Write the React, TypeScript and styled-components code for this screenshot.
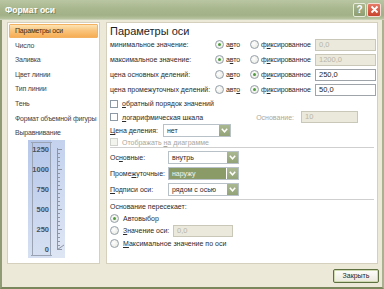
import React from 'react';
import styled, { createGlobalStyle, css } from 'styled-components';

const GlobalStyle = createGlobalStyle`
  html, body { margin: 0; padding: 0; }
  body {
    width: 384px;
    height: 289px;
    overflow: hidden;
    background: #ece9d8;
    font-family: "Liberation Sans", Arial, sans-serif;
  }
  * { box-sizing: border-box; }
`;

const sections = [
  'Параметры оси',
  'Число',
  'Заливка',
  'Цвет линии',
  'Тип линии',
  'Тень',
  'Формат объемной фигуры',
  'Выравнивание',
];

const valueRows = [
  { label: 'минимальное значение:', auto: true, value: '0,0' },
  { label: 'максимальное значение:', auto: true, value: '1200,0' },
  { label: 'цена основных делений:', auto: false, value: '250,0' },
  { label: 'цена промежуточных делений:', auto: false, value: '50,0' },
];

const tickRows = [
  { label: <>Ос<u>н</u>овные:</>, value: 'внутрь' },
  { label: <>Проме<u>ж</u>уточные:</>, value: 'наружу', active: true },
  { label: <><u>П</u>одписи оси:</>, value: 'рядом с осью' },
];

const Chevron = () => (
  <svg width="7" height="5" viewBox="0 0 7 5">
    <path d="M0.8 0.8 L3.5 3.8 L6.2 0.8" fill="none" stroke="#ffffff" strokeWidth="1.5" />
  </svg>
);

const AxisPreview = () => {
  const labels = ['1250', '1000', '750', '500', '250', '0'];
  const ticks = [];
  for (let i = 0; i <= 25; i++) {
    const y = 9 + i * 4;
    const major = i % 5 === 0;
    ticks.push(
      <line key={i} x1="29.5" y1={y + 0.5} x2={major ? 34 : 32} y2={y + 0.5} stroke="#8d95a4" strokeWidth="1" />
    );
  }
  return (
    <svg width="37" height="118" viewBox="0 0 37 118">
      <defs>
        <linearGradient id="pv" x1="0" y1="0" x2="0" y2="1">
          <stop offset="0" stopColor="#b6c7ea" />
          <stop offset="1" stopColor="#d6e0f2" />
        </linearGradient>
      </defs>
      <rect x="0" y="0" width="37" height="118" fill="url(#pv)" />
      <rect x="23" y="0" width="14" height="118" fill="#ffffff" opacity="0.2" />
      <line x1="4.5" y1="3" x2="4.5" y2="116" stroke="#9aa3b4" />
      <line x1="22.5" y1="3" x2="22.5" y2="116" stroke="#9aa3b4" />
      <line x1="3" y1="115.5" x2="24" y2="115.5" stroke="#9aa3b4" />
      <line x1="3" y1="2.5" x2="24" y2="2.5" stroke="#9aa3b4" />
      {labels.map((l, i) => (
        <text
          key={l}
          x="21"
          y={12 + i * 20}
          textAnchor="end"
          fontSize="7.5"
          fontWeight="bold"
          fill="#4a4f5a"
          fontFamily='"Liberation Sans", Arial, sans-serif'
        >
          {l}
        </text>
      ))}
      <line x1="29.5" y1="8" x2="29.5" y2="110" stroke="#8d95a4" />
      {ticks}
      <line x1="29.5" y1="109.5" x2="36" y2="105" stroke="#8d95a4" />
    </svg>
  );
};

const App: React.FC = () => {
  return (
    <Window>
      <GlobalStyle />
      <TitleBar>
        <Title>Формат оси</Title>
        <TitleButtons>
          <HelpButton>?</HelpButton>
          <CloseButton>
            <svg width="9" height="9" viewBox="0 0 9 9">
              <path d="M1.5 1.5 L7.5 7.5 M7.5 1.5 L1.5 7.5" stroke="#ffffff" strokeWidth="1.8" />
            </svg>
          </CloseButton>
        </TitleButtons>
      </TitleBar>
      <Frame>
        <Body>
          <SidePanel>
            <SectionList>
              {sections.map((s, i) => (
                <SectionItem key={s} $selected={i === 0}>
                  {s}
                </SectionItem>
              ))}
            </SectionList>
            <PreviewWrap>
              <AxisPreview />
            </PreviewWrap>
          </SidePanel>
          <MainPanel>
            <Heading>Параметры оси</Heading>
            {valueRows.map((r, i) => (
              <ValueRow key={r.label}>
                <Label>{r.label}</Label>
                <Choice>
                  <Radio $on={r.auto} />
                  <span>{i === 3 ? <>авт<u>о</u></> : <>а<u>в</u>то</>}</span>
                </Choice>
                <Choice>
                  <Radio $on={!r.auto} />
                  <span>ф<u>и</u>ксированное</span>
                </Choice>
                <Field $disabled={r.auto}>{r.value}</Field>
              </ValueRow>
            ))}
            <CheckRow>
              <Check />
              <Label>
                <u>о</u>братный порядок значений
              </Label>
            </CheckRow>
            <CheckRow>
              <Check />
              <Label $grow>
                <u>л</u>огарифмическая шкала
              </Label>
              <Label $muted>Основание:</Label>
              <BaseField $disabled>10</BaseField>
            </CheckRow>
            <DivisionRow>
              <Label $width={53}>
                <u>Ц</u>ена деления:
              </Label>
              <Select $width={68}>
                <SelectText>нет</SelectText>
                <SelectArrow>
                  <Chevron />
                </SelectArrow>
              </Select>
            </DivisionRow>
            <ShowRow>
              <Check $disabled />
              <Label $muted>
                Отображать <u>н</u>а диаграмме
              </Label>
            </ShowRow>
            <Divider />
            <TickGroup>
              {tickRows.map((t) => (
                <TickRow key={t.value}>
                  <Label $width={58}>{t.label}</Label>
                  <Select $width={71}>
                    <SelectText $active={t.active}>{t.value}</SelectText>
                    <SelectArrow>
                      <Chevron />
                    </SelectArrow>
                  </Select>
                </TickRow>
              ))}
            </TickGroup>
            <Divider />
            <CrossRow $h={12}>
              <Label>Основание пересекает:</Label>
            </CrossRow>
            <CrossRow $h={12}>
              <Radio $on />
              <Label>Автовыбор</Label>
            </CrossRow>
            <CrossRow $h={13}>
              <Radio />
              <Label $width={46}>
                <u>З</u>начение оси:
              </Label>
              <Field $disabled $width={60}>
                0,0
              </Field>
            </CrossRow>
            <CrossRow $h={13}>
              <Radio />
              <Label>
                <u>М</u>аксимальное значение по оси
              </Label>
            </CrossRow>
          </MainPanel>
        </Body>
        <Footer>
          <DialogButton>Закрыть</DialogButton>
        </Footer>
      </Frame>
    </Window>
  );
};

const Window = styled.div`
  width: 384px;
  height: 289px;
  display: flex;
  flex-direction: column;
  background: #ece9d8;
  font-size: 7px;
  color: #2b2b2b;
  u {
    text-decoration: underline;
    text-underline-offset: 1px;
  }
`;

const TitleBar = styled.div`
  height: 20px;
  flex: none;
  display: flex;
  align-items: center;
  justify-content: space-between;
  padding: 0 3px 0 5px;
  background: linear-gradient(#b9c6a2 0%, #a9b78f 45%, #a2b187 80%, #b8c4a0 100%);
  border-bottom: 1px solid #c9d2b6;
`;

const Title = styled.div`
  color: #ffffff;
  font-weight: bold;
  font-size: 8.5px;
  text-shadow: 1px 1px 0 #7a8860;
`;

const TitleButtons = styled.div`
  display: flex;
  gap: 1px;
`;

const HelpButton = styled.div`
  width: 13px;
  height: 14px;
  border: 1px solid #e6ebdb;
  border-radius: 2px;
  background: linear-gradient(#a9b68f, #8e9d72);
  color: #ffffff;
  font-weight: bold;
  font-size: 10px;
  line-height: 12px;
  text-align: center;
`;

const CloseButton = styled.div`
  width: 14px;
  height: 14px;
  border: 1px solid #f1ddd6;
  border-radius: 2px;
  background: linear-gradient(#e77a66, #c9432e);
  display: flex;
  align-items: center;
  justify-content: center;
`;

const Frame = styled.div`
  flex: 1;
  display: flex;
  flex-direction: column;
  border-left: 2px solid #8e9b74;
  border-right: 2px solid #a7b38e;
  border-bottom: 2px solid #7a875c;
`;

const Body = styled.div`
  display: flex;
  gap: 6px;
  padding: 2px 4px 0 5px;
  height: 244px;
`;

const SidePanel = styled.div`
  width: 93px;
  background: #ffffff;
  border: 1px solid #d4d0bd;
  display: flex;
  flex-direction: column;
`;

const SectionList = styled.div`
  display: flex;
  flex-direction: column;
`;

const SectionItem = styled.div<{ $selected?: boolean }>`
  height: 14.6px;
  line-height: 13px;
  padding-left: 6px;
  white-space: nowrap;
  letter-spacing: -0.2px;
  color: #444444;
  border: 1px solid transparent;
  ${(p) =>
    p.$selected &&
    css`
      margin: 1px 1px 0;
      height: 13.6px;
      line-height: 11.5px;
      padding-left: 5px;
      border-color: #f3b162;
      border-radius: 1px;
      background: linear-gradient(#fde4b4 0%, #f9c57e 45%, #f6ad55 100%);
      color: #3d2a10;
    `}
`;

const PreviewWrap = styled.div`
  padding-left: 20px;
  display: flex;
`;

const MainPanel = styled.div`
  flex: 1;
  background: #ffffff;
  border: 1px solid #d4d0bd;
  padding: 2px 1px 0 3px;
  display: flex;
  flex-direction: column;
`;

const Heading = styled.div`
  font-size: 11px;
  line-height: 12px;
  height: 12px;
  color: #1e1e1e;
`;

const ValueRow = styled.div`
  height: 15px;
  display: grid;
  grid-template-columns: 105px 35px 65px 61px;
  align-items: center;
`;

const Label = styled.span<{ $muted?: boolean; $width?: number; $grow?: boolean }>`
  white-space: nowrap;
  color: ${(p) => (p.$muted ? '#aaa89c' : '#2b2b2b')};
  ${(p) => p.$width && `width: ${p.$width}px; flex: none;`}
  ${(p) => p.$grow && 'flex: 1;'}
`;

const Choice = styled.div`
  display: flex;
  align-items: center;
  gap: 2px;
  letter-spacing: -0.1px;
`;

const Radio = styled.span<{ $on?: boolean }>`
  width: 9px;
  height: 9px;
  flex: none;
  border-radius: 50%;
  border: 1px solid #96a0aa;
  background: radial-gradient(circle at 40% 40%, #ffffff, #e2e5dc);
  position: relative;
  ${(p) =>
    p.$on &&
    css`
      &::after {
        content: '';
        position: absolute;
        left: 2px;
        top: 2px;
        width: 3px;
        height: 3px;
        border-radius: 50%;
        background: #4f9a3e;
      }
    `}
`;

const Check = styled.span<{ $disabled?: boolean }>`
  width: 8px;
  height: 8px;
  flex: none;
  border: 1px solid ${(p) => (p.$disabled ? '#cfd3cc' : '#8d9aa6')};
  background: ${(p) => (p.$disabled ? '#f4f4ee' : '#ffffff')};
`;

const Field = styled.div<{ $disabled?: boolean; $width?: number }>`
  height: 12px;
  ${(p) => p.$width && `width: ${p.$width}px;`}
  border: 1px solid ${(p) => (p.$disabled ? '#c9c7b8' : '#9ea4aa')};
  background: ${(p) => (p.$disabled ? '#ebe9dc' : '#ffffff')};
  color: ${(p) => (p.$disabled ? '#b7b5a8' : '#1e1e1e')};
  padding-left: 3px;
  line-height: 10px;
  font-size: 7.5px;
`;

const BaseField = styled(Field)`
  width: 57px;
  margin-left: 3px;
  margin-right: 18px;
`;

const CheckRow = styled.div`
  height: 13.5px;
  display: flex;
  align-items: center;
  gap: 4px;
`;

const DivisionRow = styled.div`
  height: 13px;
  display: flex;
  align-items: center;
`;

const ShowRow = styled.div`
  height: 10px;
  display: flex;
  align-items: center;
  gap: 4px;
`;

const Divider = styled.div`
  height: 1px;
  margin-right: 2px;
  background: #cfcfcf;
  flex: none;
`;

const TickGroup = styled.div`
  padding: 1px 0 2px;
  display: flex;
  flex-direction: column;
`;

const TickRow = styled.div`
  height: 16px;
  display: flex;
  align-items: center;
`;

const Select = styled.div<{ $width: number }>`
  width: ${(p) => p.$width}px;
  height: 13px;
  display: flex;
  border: 1px solid #b8c0c8;
  background: #ffffff;
`;

const SelectText = styled.div<{ $active?: boolean }>`
  flex: 1;
  padding-left: 3px;
  line-height: 11px;
  color: ${(p) => (p.$active ? '#f4f6ee' : '#2b2b2b')};
  background: ${(p) => (p.$active ? '#8a9b68' : 'transparent')};
  margin: ${(p) => (p.$active ? '0 1px 0 0' : '0')};
`;

const SelectArrow = styled.div`
  width: 11px;
  flex: none;
  background: linear-gradient(#aab891, #93a377);
  display: flex;
  align-items: center;
  justify-content: center;
`;

const CrossRow = styled.div<{ $h: number }>`
  height: ${(p) => p.$h}px;
  display: flex;
  align-items: center;
  gap: 4px;
`;

const Footer = styled.div`
  flex: 1;
  display: flex;
  justify-content: flex-end;
  align-items: flex-start;
  padding: 5px 3px 0 0;
`;

const DialogButton = styled.div`
  width: 46px;
  height: 14px;
  border: 1px solid #5f7040;
  border-radius: 2px;
  background: linear-gradient(#fefefc, #ebe9dc);
  box-shadow: inset 0 0 0 1px #cfdab2;
  text-align: center;
  line-height: 12px;
  color: #1e1e1e;
`;

export default App;
